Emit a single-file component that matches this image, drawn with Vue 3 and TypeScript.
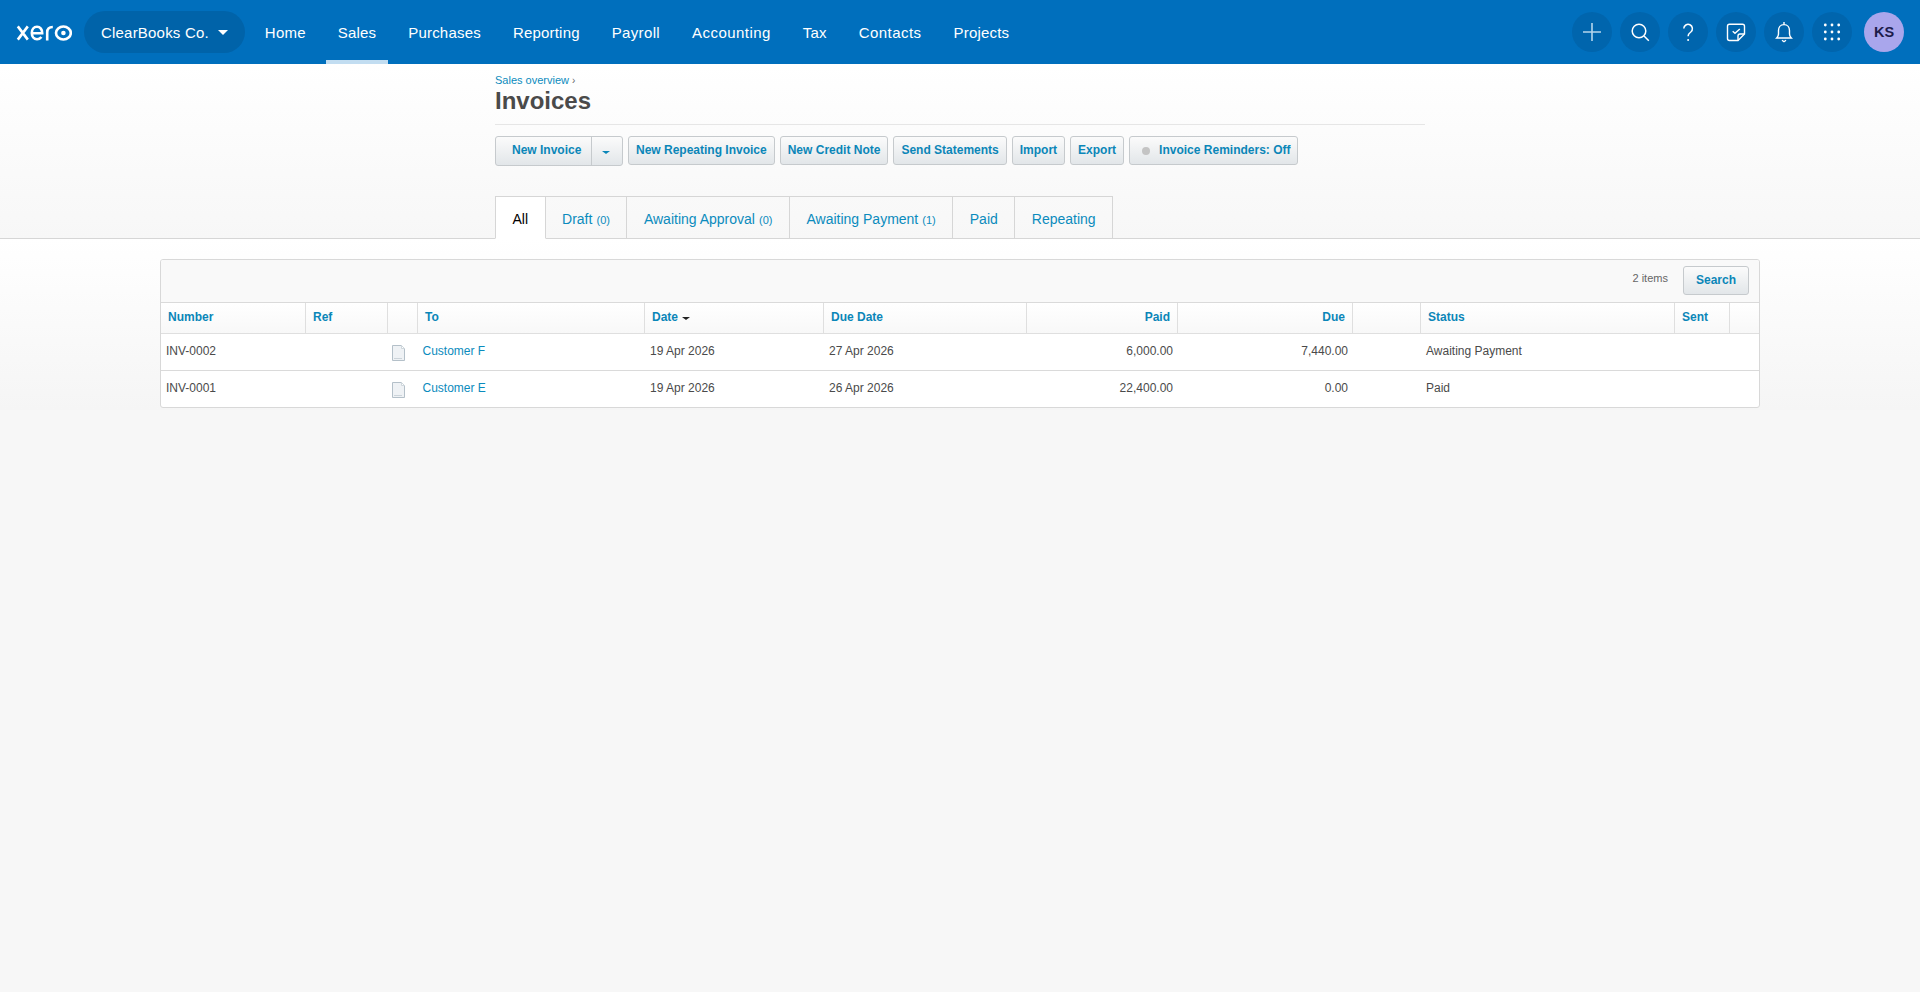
<template>
  <div class="page">
    <header class="topbar">
      <svg class="logo" width="56" height="16" viewBox="0 0 56 16" fill="none" stroke="#fff" stroke-width="2.6">
        <path d="M1.8 1.4l10 13.2M11.8 1.4l-10 13.2" />
        <path d="M15.8 8.2H26.2C26.4 4.4 24.2 1.8 21 1.8C17.8 1.8 15.8 4.6 15.8 8C15.8 11.5 17.9 14.2 21 14.2C22.9 14.2 24.4 13.4 25.4 12" />
        <path d="M31.2 15.4V7.4C31.2 3.8 33.2 2 36.8 2" />
        <ellipse cx="47.4" cy="8" rx="7.4" ry="6.5" />
        <circle cx="47.4" cy="8" r="2.3" fill="#fff" stroke="none" />
      </svg>
      <button class="org">ClearBooks Co.<span class="org-caret"></span></button>
      <nav class="nav">
        <a v-for="item in navItems" :key="item" class="nav-item" :class="{ active: item === 'Sales' }">{{ item }}</a>
      </nav>
      <div class="actions">
        <button class="round">
          <svg width="40" height="40" viewBox="0 0 40 40" fill="none" stroke="#b5d5ec" stroke-width="1.6">
            <path d="M11 20H29M20 11V29" />
          </svg>
        </button>
        <button class="round">
          <svg width="40" height="40" viewBox="0 0 40 40" fill="none" stroke="#fff" stroke-width="1.5">
            <circle cx="19" cy="19" r="6.8" />
            <path d="M24 24l4.8 4.8" />
          </svg>
        </button>
        <button class="round">
          <svg width="40" height="40" viewBox="0 0 40 40" fill="none" stroke="#fff" stroke-width="1.5">
            <path d="M15.8 16.6a4.3 4.3 0 1 1 7 3.4c-1.6 1.2-2.7 2.2-2.7 4.2" />
            <circle cx="20.1" cy="28" r="1" fill="#fff" stroke="none" />
          </svg>
        </button>
        <button class="round">
          <svg width="40" height="40" viewBox="0 0 40 40" fill="none" stroke="#fff" stroke-width="1.4">
            <path d="M13.5 12.2H26.5a2 2 0 0 1 2 2V22L22 28.5H13.5a2 2 0 0 1-2-2V14.2a2 2 0 0 1 2-2z" />
            <path d="M28.5 22H24a2 2 0 0 0-2 2v4.5" />
            <path d="M16.7 19.2l2.3 2.1 4.8-4.4" />
          </svg>
        </button>
        <button class="round">
          <svg width="40" height="40" viewBox="0 0 40 40" fill="none" stroke="#fff" stroke-width="1.4">
            <path d="M20 12.6c-3.6 0-5.5 2.8-5.5 6v3.4c0 2-1 3.2-1.8 4h14.6c-.8-.8-1.8-2-1.8-4v-3.4c0-3.2-1.9-6-5.5-6z" />
            <path d="M20 10v2.6M18 28.2l2 1.5 2-1.5" />
          </svg>
        </button>
        <button class="round">
          <svg width="40" height="40" viewBox="0 0 40 40" fill="#fff">
            <template v-for="y in [13, 20, 27]" :key="y">
              <circle v-for="x in [13.3, 20, 26.7]" :key="x" :cx="x" :cy="y" r="1.4" />
            </template>
          </svg>
        </button>
        <div class="avatar">KS</div>
      </div>
    </header>

    <section class="intro">
      <div class="intro-inner">
        <div class="crumb"><a>Sales overview</a> <span class="crumb-sep">›</span></div>
        <h1 class="title">Invoices</h1>
        <div class="toolbar">
          <div class="btn split">
            <span class="split-main">New Invoice</span>
            <span class="split-caret"><i></i></span>
          </div>
          <button v-for="label in actionButtons" :key="label" class="btn">{{ label }}</button>
          <button class="btn reminder"><span class="dot"></span>Invoice Reminders: Off</button>
        </div>
        <div class="tabs">
          <a v-for="tab in tabs" :key="tab.label" class="tab" :class="{ active: tab.label === 'All' }">
            {{ tab.label }}<span v-if="tab.count !== undefined" class="count"> ({{ tab.count }})</span>
          </a>
        </div>
      </div>
    </section>

    <section class="content">
      <div class="panel">
        <div class="panel-bar">
          <span class="items">2 items</span>
          <button class="btn search">Search</button>
        </div>
        <table class="grid">
          <colgroup>
            <col v-for="col in columns" :key="col.key" :class="'col-' + col.key" />
          </colgroup>
          <thead>
            <tr>
              <th v-for="col in columns" :key="col.key" :class="{ num: col.num }">
                {{ col.label }}<i v-if="col.key === 'date'" class="sort"></i>
              </th>
            </tr>
          </thead>
          <tbody>
            <tr v-for="row in invoices" :key="row.number">
              <td>{{ row.number }}</td>
              <td></td>
              <td class="doc">
                <svg width="13" height="16" viewBox="0 0 13 16">
                  <path d="M.5.5H9.5L12.5 3.5V15.5H.5z" fill="#eff2f5" stroke="#b4c0c9" />
                  <path d="M9.5.5V3.5H12.5z" fill="#fff" stroke="#cfd7dc" />
                  <path d="M2.5 13.5h8" stroke="#a9b6bf" stroke-dasharray="1 1" />
                </svg>
              </td>
              <td class="to"><a class="link">{{ row.to }}</a></td>
              <td>{{ row.date }}</td>
              <td>{{ row.dueDate }}</td>
              <td class="num">{{ row.paid }}</td>
              <td class="num">{{ row.due }}</td>
              <td></td>
              <td>{{ row.status }}</td>
              <td></td>
              <td></td>
            </tr>
          </tbody>
        </table>
      </div>
    </section>
  </div>
</template>

<script setup lang="ts">
interface Tab {
  label: string;
  count?: number;
}

interface Column {
  key: string;
  label: string;
  num?: boolean;
}

interface Invoice {
  number: string;
  to: string;
  date: string;
  dueDate: string;
  paid: string;
  due: string;
  status: string;
}

const navItems = ['Home', 'Sales', 'Purchases', 'Reporting', 'Payroll', 'Accounting', 'Tax', 'Contacts', 'Projects'];

const actionButtons = ['New Repeating Invoice', 'New Credit Note', 'Send Statements', 'Import', 'Export'];

const tabs: Tab[] = [
  { label: 'All' },
  { label: 'Draft', count: 0 },
  { label: 'Awaiting Approval', count: 0 },
  { label: 'Awaiting Payment', count: 1 },
  { label: 'Paid' },
  { label: 'Repeating' },
];

const columns: Column[] = [
  { key: 'number', label: 'Number' },
  { key: 'ref', label: 'Ref' },
  { key: 'icon', label: '' },
  { key: 'to', label: 'To' },
  { key: 'date', label: 'Date' },
  { key: 'duedate', label: 'Due Date' },
  { key: 'paid', label: 'Paid', num: true },
  { key: 'due', label: 'Due', num: true },
  { key: 'blank', label: '' },
  { key: 'status', label: 'Status' },
  { key: 'sent', label: 'Sent' },
  { key: 'end', label: '' },
];

const invoices: Invoice[] = [
  {
    number: 'INV-0002',
    to: 'Customer F',
    date: '19 Apr 2026',
    dueDate: '27 Apr 2026',
    paid: '6,000.00',
    due: '7,440.00',
    status: 'Awaiting Payment',
  },
  {
    number: 'INV-0001',
    to: 'Customer E',
    date: '19 Apr 2026',
    dueDate: '26 Apr 2026',
    paid: '22,400.00',
    due: '0.00',
    status: 'Paid',
  },
];
</script>

<style>
body {
  background: #f7f7f7;
}
</style>

<style scoped>
.page {
  min-height: 100vh;
  font-family: 'Liberation Sans', Arial, sans-serif;
  font-size: 12px;
  color: #4a4a4a;
}

button {
  font-family: inherit;
  cursor: pointer;
}

.topbar {
  display: flex;
  align-items: center;
  height: 64px;
  padding: 0 16px;
  box-sizing: border-box;
  background: #006fbd;
}

.logo {
  flex-shrink: 0;
  margin-top: 1px;
}

.org {
  display: flex;
  align-items: center;
  height: 42px;
  margin-left: 12px;
  padding: 0 17px;
  border: none;
  border-radius: 21px;
  background: #0063a9;
  color: #fff;
  font-size: 15px;
  letter-spacing: 0.2px;
}

.org-caret {
  margin-left: 9px;
  border-top: 5px solid #fff;
  border-left: 5px solid transparent;
  border-right: 5px solid transparent;
}

.nav {
  display: flex;
  gap: 8px;
  margin-left: 8px;
  align-self: stretch;
}

.nav-item {
  display: flex;
  align-items: center;
  padding: 0 12px;
  color: #fff;
  font-size: 15px;
  letter-spacing: 0.2px;
  border-bottom: 4px solid transparent;
  border-top: 4px solid transparent;
}

/* these labels run a little wider than Liberation Sans sets them */
.nav-item:nth-child(5) {
  letter-spacing: 0.35px;
}

.nav-item:nth-child(6),
.nav-item:nth-child(8) {
  letter-spacing: 0.45px;
}

.nav-item.active {
  border-bottom-color: #c2ddf1;
}

.actions {
  display: flex;
  align-items: center;
  gap: 8px;
  margin-left: auto;
}

.round {
  width: 40px;
  height: 40px;
  padding: 0;
  border: none;
  border-radius: 50%;
  background: #0065ad;
}

.round svg {
  display: block;
}

.avatar {
  display: flex;
  align-items: center;
  justify-content: center;
  width: 40px;
  height: 40px;
  margin-left: 4px;
  border-radius: 50%;
  background: #a9a6ec;
  color: #1c1c4a;
  font-size: 14.5px;
  font-weight: 700;
}

.intro {
  background: linear-gradient(#fff, #f7f7f7);
  border-bottom: 1px solid #d6d6d6;
}

.intro-inner {
  width: 930px;
  margin: 0 auto;
  padding-top: 10px;
}

.crumb {
  font-size: 11px;
  line-height: 13px;
  color: #666;
}

.crumb a,
.link {
  color: #0b8bbd;
}

.crumb-sep {
  font-size: 10px;
}

.title {
  margin: 0;
  padding-bottom: 9px;
  border-bottom: 1px solid #e6e6e6;
  font-size: 24px;
  line-height: 28px;
  font-weight: 700;
  color: #4a4a4a;
}

.toolbar {
  display: flex;
  gap: 5px;
  margin-top: 11px;
  align-items: flex-start;
}

.btn {
  display: inline-flex;
  align-items: center;
  height: 29px;
  padding: 0 7px 2px;
  box-sizing: border-box;
  border: 1px solid #c6cacd;
  border-radius: 3px;
  background: linear-gradient(#fbfbfb, #e2e6e9);
  color: #0b86b8;
  font-size: 12px;
  font-weight: 700;
  white-space: nowrap;
}

.split {
  height: 30px;
  padding: 0;
}

.split-main {
  padding: 0 7px 2px 16px;
  width: 95px;
  box-sizing: border-box;
}

.split-caret {
  display: flex;
  align-items: center;
  justify-content: center;
  width: 31px;
  height: 100%;
  padding-right: 2px;
  border-left: 1px solid #c6cacd;
  box-sizing: border-box;
}

.split-caret i {
  margin-top: 2px;
  border-top: 3px solid #0b86b8;
  border-left: 4px solid transparent;
  border-right: 4px solid transparent;
}

.reminder {
  padding-left: 12px;
  padding-right: 7px;
}

.search {
  padding: 0 12px 2px;
}

.dot {
  width: 8px;
  height: 8px;
  margin-right: 9px;
  margin-top: 3px;
  border-radius: 50%;
  background: #c4c4c4;
}

.tabs {
  display: flex;
  margin-top: 30px;
  margin-bottom: -1px;
}

.tab {
  height: 43px;
  padding: 2px 16.5px 0;
  box-sizing: border-box;
  border: 1px solid #d6d6d6;
  border-left: none;
  line-height: 40px;
  font-size: 14px;
  color: #0b8bbd;
  white-space: nowrap;
}

.tab:first-child {
  border-left: 1px solid #d6d6d6;
}

.tab.active {
  background: #fff;
  border-bottom-color: #fff;
  color: #000;
}

.count {
  margin-left: 1px;
  font-size: 11px;
}

.content {
  padding: 20px 160px 0;
  height: 171px;
  box-sizing: border-box;
  background: linear-gradient(#fff, #f5f5f5);
}

.panel {
  border: 1px solid #d8d8d8;
  border-radius: 3px;
  background: #fff;
  overflow: hidden;
}

.panel-bar {
  display: flex;
  align-items: center;
  justify-content: flex-end;
  height: 43px;
  padding: 0 10px 1px 0;
  box-sizing: border-box;
  border-bottom: 1px solid #dadada;
  background: #f9f9f9;
}

.items {
  margin-right: 15px;
  margin-bottom: 6px;
  font-size: 11px;
  color: #666;
}

.grid {
  width: 100%;
  table-layout: fixed;
  border-collapse: separate;
  border-spacing: 0;
}

.col-number { width: 145px; }
.col-ref { width: 82px; }
.col-icon { width: 30px; }
.col-to { width: 227px; }
.col-date { width: 179px; }
.col-duedate { width: 203px; }
.col-paid { width: 151px; }
.col-due { width: 175px; }
.col-blank { width: 68px; }
.col-status { width: 254px; }
.col-sent { width: 55px; }
.col-end { width: 29px; }

th {
  height: 31px;
  padding: 0 7px 2px;
  box-sizing: border-box;
  border-right: 1px solid #dfdfdf;
  border-bottom: 1px solid #dfdfdf;
  background: linear-gradient(#fff, #f8f8f8);
  color: #0b86b8;
  font-size: 12px;
  font-weight: 700;
  text-align: left;
}

th:last-child {
  border-right: none;
}

th.num {
  text-align: right;
}

.sort {
  display: inline-block;
  margin-left: 4px;
  vertical-align: 1px;
  border-top: 3.5px solid #222;
  border-left: 4px solid transparent;
  border-right: 4px solid transparent;
}

td {
  height: 37px;
  padding: 0 5px 2px;
  box-sizing: border-box;
  border-bottom: 1px solid #dadada;
  font-size: 12px;
  color: #4a4a4a;
  white-space: nowrap;
}

tbody tr:last-child td {
  height: 36px;
  border-bottom: none;
}

td.num {
  text-align: right;
}

td.to {
  padding-left: 4.5px;
}

td.doc {
  padding: 0 4px;
}

.doc svg {
  display: block;
  margin-top: 1px;
}
</style>
